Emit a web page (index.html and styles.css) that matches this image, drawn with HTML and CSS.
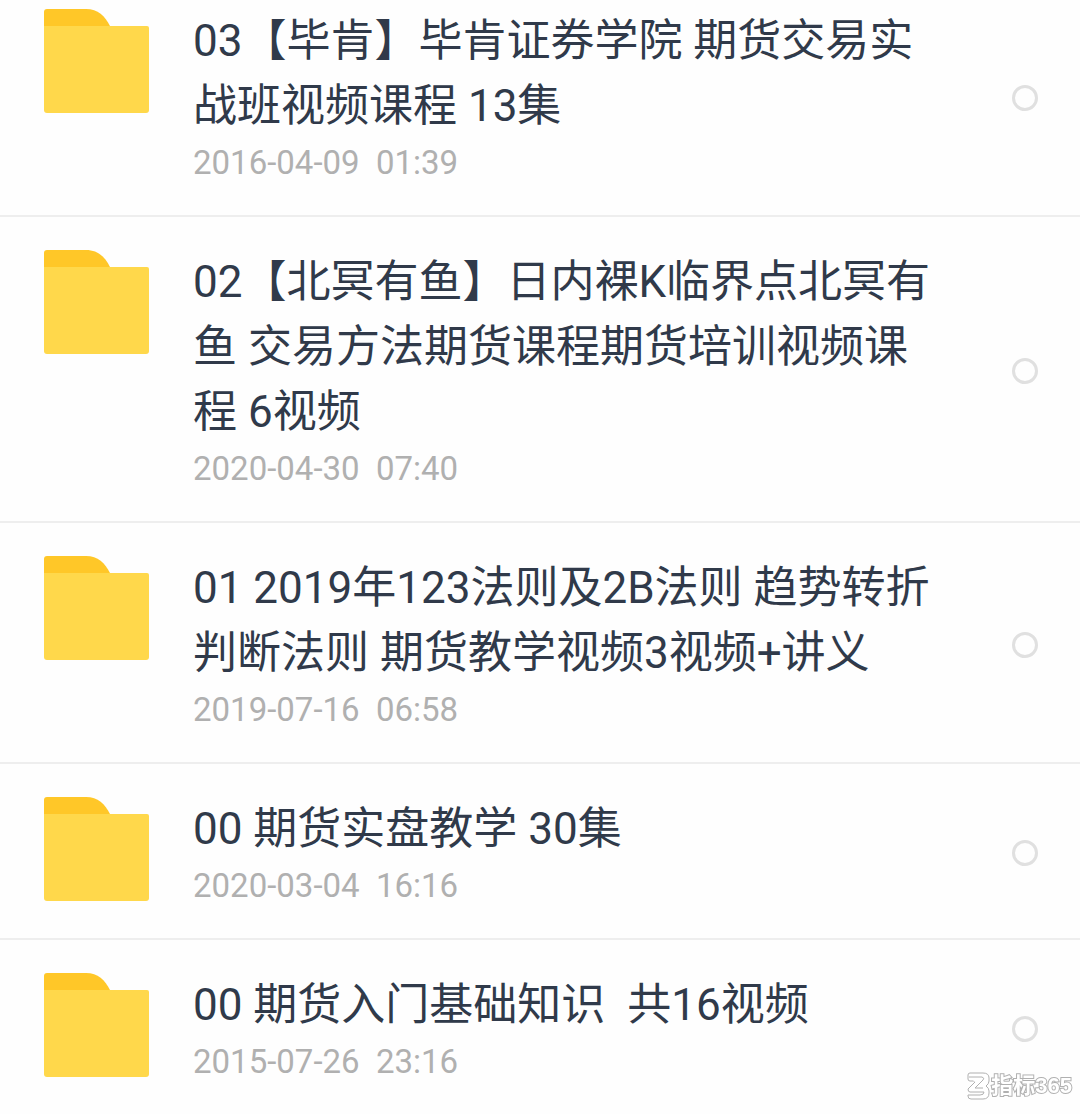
FILE: index.html
```html
<!DOCTYPE html>
<html lang="zh-CN">
<head>
  <meta charset="utf-8">
  <meta name="viewport" content="width=device-width, initial-scale=1">
  <title>文件列表</title>
  <link rel="stylesheet" href="styles.css">
</head>
<body>
  <svg width="0" height="0" class="sprite" aria-hidden="true">
    <symbol id="folder" viewBox="0 0 105 104">
      <path fill="#ffc728" d="M0 3Q0 0 3 0H42C54 0 61 7 66 17V24H0Z"/>
      <path fill="#ffd84b" d="M0 17H103Q105 17 105 19V101Q105 104 102 104H3Q0 104 0 101Z"/>
    </symbol>
  </svg>

  <ul class="files">
    <li class="file">
      <svg class="file__icon" aria-hidden="true"><use href="#folder"/></svg>
      <div class="file__info">
        <label class="file__name" for="file-1">03【毕肯】毕肯证券学院 期货交易实战班视频课程 13集</label>
        <time class="file__date">2016-04-09  01:39</time>
      </div>
      <input class="file__check" id="file-1" type="checkbox">
    </li>
    <li class="file">
      <svg class="file__icon" aria-hidden="true"><use href="#folder"/></svg>
      <div class="file__info">
        <label class="file__name" for="file-2">02【北冥有鱼】日内裸K临界点北冥有鱼 交易方法期货课程期货培训视频课程 6视频</label>
        <time class="file__date">2020-04-30  07:40</time>
      </div>
      <input class="file__check" id="file-2" type="checkbox">
    </li>
    <li class="file">
      <svg class="file__icon" aria-hidden="true"><use href="#folder"/></svg>
      <div class="file__info">
        <label class="file__name" for="file-3">01 2019年123法则及2B法则 趋势转折判断法则 期货教学视频3视频+讲义</label>
        <time class="file__date">2019-07-16  06:58</time>
      </div>
      <input class="file__check" id="file-3" type="checkbox">
    </li>
    <li class="file">
      <svg class="file__icon" aria-hidden="true"><use href="#folder"/></svg>
      <div class="file__info">
        <label class="file__name" for="file-4">00 期货实盘教学 30集</label>
        <time class="file__date">2020-03-04  16:16</time>
      </div>
      <input class="file__check" id="file-4" type="checkbox">
    </li>
    <li class="file">
      <svg class="file__icon" aria-hidden="true"><use href="#folder"/></svg>
      <div class="file__info">
        <label class="file__name" for="file-5">00 期货入门基础知识  共16视频</label>
        <time class="file__date">2015-07-26  23:16</time>
      </div>
      <input class="file__check" id="file-5" type="checkbox">
    </li>
  </ul>

  <div class="watermark">
    <svg class="watermark__logo" viewBox="0 0 24 28" aria-hidden="true">
      <path d="M3 1H16Q22 1 22 6V9Q22 12 19 14Q22 16 22 19V21Q22 27 16 27H4Q1 27 1 24V23H13Q17 23 17 20H3Q1 20 1 17L9 9H3Q1 9 1 7V3Q1 1 3 1Z"/>
      <path d="M2 5H15Q18 6 16 8L8 16H16"/>
    </svg>
    <span class="watermark__text">指标365</span>
  </div>
</body>
</html>
```
FILE: styles.css
```css
body {
  height: 100vh;
  margin: 0;
  overflow: hidden;
  background-color: #fefefe;
  font-family: Roboto, "Noto Sans CJK SC", sans-serif;
}

.sprite {
  position: absolute;
}

/* the list is scrolled a little, the first row is cut by the top edge */
.files {
  margin: -24px 0 0;
  padding: 0;
  list-style: none;
}

.file {
  display: flex;
  align-items: center;
  padding: 33px 42px 29px 44px;
  border-bottom: 2px solid #eeeeee;
}

.file__icon {
  flex: none;
  align-self: flex-start;
  width: 105px;
  height: 104px;
}

.file__info {
  flex: 1;
  margin: 0 68px 0 44px;
}

.file__name,
.file__date {
  display: block;
  white-space: pre-wrap;
}

.file__name {
  color: #303a4a;
  font-size: 44px;
  line-height: 65px;
}

.file__date {
  color: #b0b0b0;
  font-size: 33px;
  line-height: 47px;
}

.file__check {
  flex: none;
  box-sizing: border-box;
  width: 26px;
  height: 26px;
  margin: 0;
  border: 3px solid #e0e0e0;
  border-radius: 50%;
  background-color: #fefefe;
  appearance: none;
}

.file__check:checked {
  background-color: #ffd84b;
}

.watermark {
  position: fixed;
  right: 8px;
  bottom: 14px;
  display: flex;
  align-items: center;
}

.watermark__logo {
  width: 24px;
  height: 28px;
  fill: #ffffff;
  stroke: #b0b0b0;
}

.watermark__text {
  color: #ffffff;
  font-family: "Liberation Sans", "Noto Sans CJK SC", sans-serif;
  font-size: 22px;
  font-weight: bold;
  line-height: 28px;
  -webkit-text-stroke: 2px #b0b0b0;
  paint-order: stroke fill;
}
```
